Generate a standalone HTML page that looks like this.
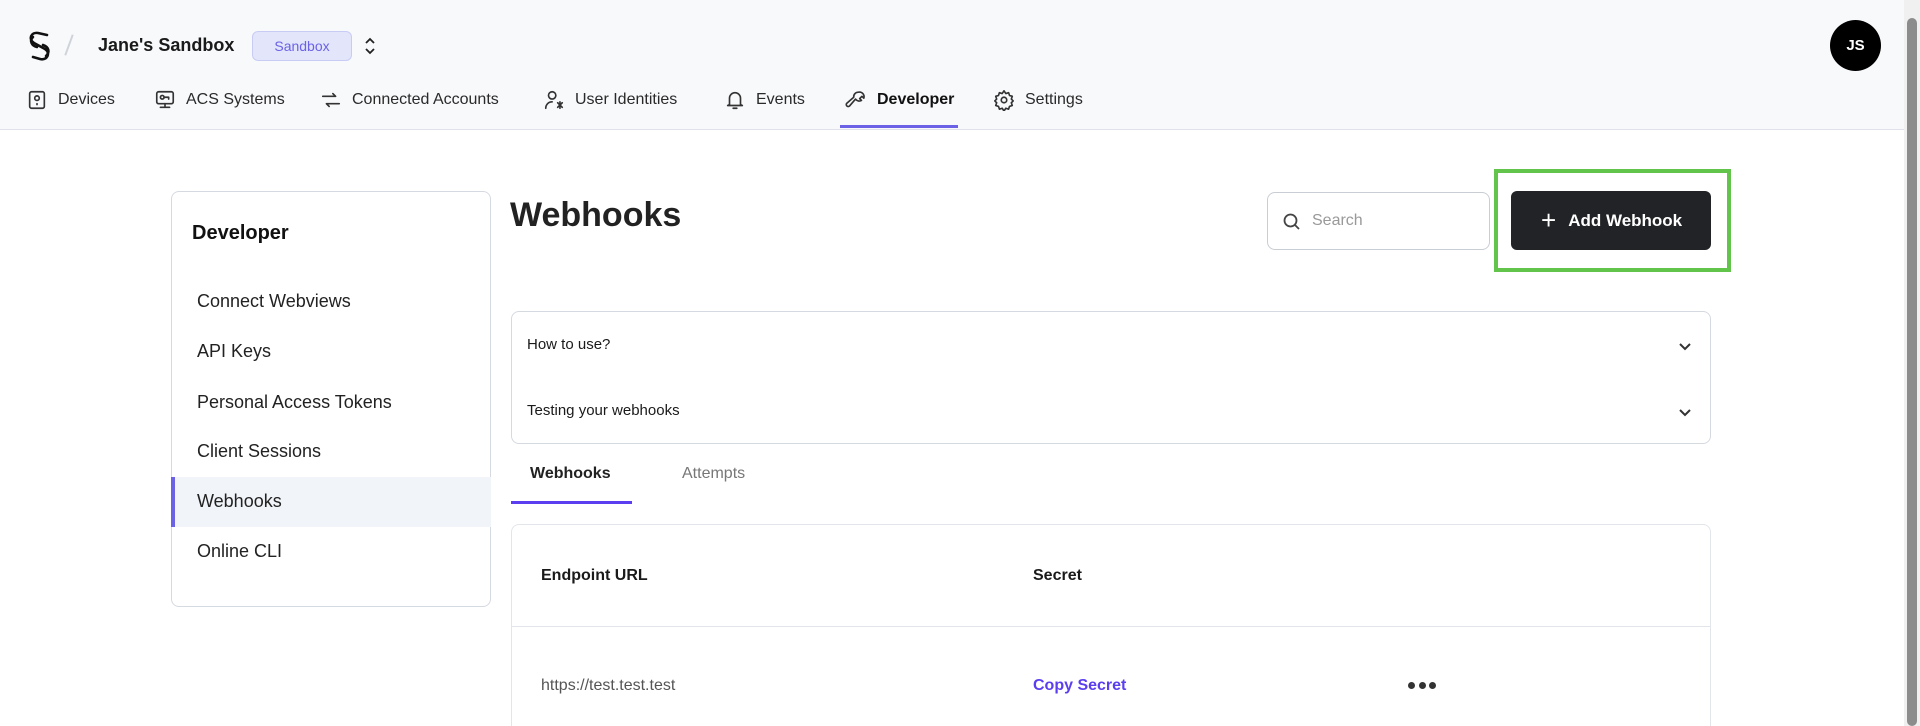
<!DOCTYPE html>
<html><head><meta charset="utf-8"><style>
*{box-sizing:border-box;margin:0;padding:0}
html,body{width:1920px;height:726px;overflow:hidden}
body{background:#fff;font-family:"Liberation Sans",sans-serif;color:#1a1a1a;position:relative}
.abs{position:absolute}
.top{position:absolute;left:0;top:0;width:1904px;height:130px;background:#f8f9fb;border-bottom:1px solid #dfe2e8}
.nav{position:absolute;top:89px;font-size:16px;color:#2a2a2a;display:flex;align-items:center;gap:10px}
.nav svg{width:22px;height:22px;fill:none;stroke:#333;stroke-width:1.8;stroke-linecap:round;stroke-linejoin:round}
.side{left:171px;top:191px;width:320px;height:416px;border:1px solid #d5d9e0;border-radius:8px}
.si{position:absolute;left:25px;font-size:18px;color:#222}
.box{border:1px solid #d5d9e0;border-radius:8px}
.chev{position:absolute;right:18px;width:14px;height:14px;fill:none;stroke:#333;stroke-width:2}
</style></head><body>
<div class="top"></div>
<svg class="abs" style="left:26px;top:30px" width="28" height="32" viewBox="0 0 28 32" fill="none" stroke="#111" stroke-width="2.6" stroke-linecap="round"><path d="M21 5 L12 3 C5 2 2 9 8 13 L19 19 C25 23 21 31 14 29 L7 27"/><path d="M7 7 C3 11 6 16 11 17 M17 15 C23 17 24 22 20 26"/></svg>
<div class="abs" style="left:68px;top:34px;width:2px;height:22px;background:#cfd3da;transform:rotate(20deg)"></div>
<div class="abs" style="left:98px;top:35px;font-size:18px;font-weight:bold">Jane's Sandbox</div>
<div class="abs" style="left:252px;top:31px;width:100px;height:30px;background:#e3e5fb;border:1px solid #c8ccf4;border-radius:6px;color:#6b62e6;font-size:14px;text-align:center;line-height:28px">Sandbox</div>
<svg class="abs" style="left:364px;top:36px" width="12" height="20" viewBox="0 0 12 20" fill="none" stroke="#222" stroke-width="1.8"><path d="M2 7l4-4 4 4M2 13l4 4 4-4"/></svg>
<div class="abs" style="left:1830px;top:20px;width:51px;height:51px;border-radius:50%;background:#000;color:#fff;font-weight:bold;font-size:15px;text-align:center;line-height:51px">JS</div>

<div class="nav" style="left:26px"><svg viewBox="0 0 24 24"><rect x="4" y="3" width="16" height="18" rx="2"/><circle cx="12" cy="10" r="2.5"/><path d="M12 16v1"/></svg>Devices</div>
<div class="nav" style="left:154px"><svg viewBox="0 0 24 24"><rect x="3" y="3" width="18" height="13" rx="2"/><circle cx="9" cy="9" r="2"/><path d="M11 9h5v2M12 16v4M7 20h10"/></svg>ACS Systems</div>
<div class="nav" style="left:320px"><svg viewBox="0 0 24 24"><path d="M3 8h14l-3-3M21 16H7l3 3"/></svg>Connected Accounts</div>
<div class="nav" style="left:543px"><svg viewBox="0 0 24 24"><circle cx="10" cy="7" r="4"/><path d="M3 21c0-4 3-7 7-7M16 15l5 5M21 15l-5 5M18.5 14v7"/></svg>User Identities</div>
<div class="nav" style="left:724px"><svg viewBox="0 0 24 24"><path d="M6 17V10a6 6 0 0112 0v7l2 1H4zM10 21h4"/></svg>Events</div>
<div class="nav" style="left:845px;font-weight:bold;color:#111"><svg viewBox="0 0 24 24"><path d="M14.5 3.5a5 5 0 016 6.5l-2-2-2.5 2.5 2 2a5 5 0 01-6.5-1.5L5 18.5a2 2 0 01-3-3l7.5-6.5A5 5 0 0114.5 3.5z"/></svg>Developer</div>
<div class="abs" style="left:840px;top:125px;width:118px;height:3px;background:#6b62e6"></div>
<div class="nav" style="left:993px"><svg viewBox="0 0 24 24"><circle cx="12" cy="12" r="3"/><path d="M12 2l2 3 3-1 1 3 3 1-1 3 2 2-2 2 1 3-3 1-1 3-3-1-2 3-2-3-3 1-1-3-3-1 1-3-2-2 2-2-1-3 3-1 1-3 3 1z"/></svg>Settings</div>

<div class="abs side">
<div class="abs" style="left:20px;top:30px;font-size:20px;font-weight:bold;color:#111">Developer</div>
<div class="si" style="top:99px">Connect Webviews</div>
<div class="si" style="top:149px">API Keys</div>
<div class="si" style="top:200px">Personal Access Tokens</div>
<div class="si" style="top:249px">Client Sessions</div>
<div class="abs" style="left:-1px;top:285px;width:320px;height:50px;background:#f1f4f9;border-left:4px solid #6b62e6"></div>
<div class="si" style="top:299px">Webhooks</div>
<div class="si" style="top:349px">Online CLI</div>
</div>

<div class="abs" style="left:510px;top:196px;font-size:34px;font-weight:bold;color:#222">Webhooks</div>
<div class="abs box" style="left:1267px;top:192px;width:223px;height:58px;border-color:#c9cdd4">
<svg class="abs" style="left:14px;top:19px" width="20" height="20" viewBox="0 0 20 20" fill="none" stroke="#444" stroke-width="1.8"><circle cx="8.5" cy="8.5" r="6"/><path d="M13 13l4 4"/></svg>
<div class="abs" style="left:44px;top:19px;font-size:16px;color:#999">Search</div></div>
<div class="abs" style="left:1494px;top:169px;width:237px;height:103px;border:4px solid #62c44a"></div>
<div class="abs" style="left:1511px;top:191px;width:200px;height:59px;background:#222326;border-radius:6px;color:#fff;font-weight:bold;font-size:17px;line-height:59px;padding-left:30px"><span style="font-weight:normal;font-size:26px;vertical-align:-3px;margin-right:12px">+</span>Add Webhook</div>

<div class="abs box" style="left:511px;top:311px;width:1200px;height:133px">
<div class="abs" style="left:15px;top:24px;font-size:15px">How to use?</div>
<svg class="chev" style="top:27px" viewBox="0 0 14 14"><path d="M2 5l5 5 5-5"/></svg>
<div class="abs" style="left:15px;top:90px;font-size:15px">Testing your webhooks</div>
<svg class="chev" style="top:93px" viewBox="0 0 14 14"><path d="M2 5l5 5 5-5"/></svg>
</div>
<div class="abs" style="left:530px;top:465px;font-size:16px;font-weight:bold;color:#222">Webhooks</div>
<div class="abs" style="left:682px;top:465px;font-size:16px;color:#777">Attempts</div>
<div class="abs" style="left:511px;top:501px;width:121px;height:3px;background:#5b3ef0"></div>

<div class="abs" style="left:511px;top:524px;width:1200px;height:202px;border:1px solid #e2e5ea;border-bottom:none;border-radius:8px 8px 0 0;overflow:hidden">
<div class="abs" style="left:29px;top:42px;font-size:16px;font-weight:bold">Endpoint URL</div>
<div class="abs" style="left:521px;top:42px;font-size:16px;font-weight:bold">Secret</div>
<div class="abs" style="left:0;top:101px;width:1198px;height:1px;background:#e2e5ea"></div>
<div class="abs" style="left:29px;top:152px;font-size:16px;color:#555">https://test.test.test</div>
<div class="abs" style="left:521px;top:152px;font-size:16px;color:#5b3ef0;font-weight:bold">Copy Secret</div>
<div class="abs" style="left:896px;top:157px;width:28px;height:7px;display:flex;justify-content:space-between"><i style="width:7px;height:7px;border-radius:50%;background:#333"></i><i style="width:7px;height:7px;border-radius:50%;background:#333"></i><i style="width:7px;height:7px;border-radius:50%;background:#333"></i></div>
</div>
<div class="abs" style="left:1904px;top:0;width:16px;height:726px;background:#f0f0f0"></div>
<div class="abs" style="left:1907px;top:18px;width:10px;height:708px;background:#8c8c8c;border-radius:5px"></div>
</body></html>
